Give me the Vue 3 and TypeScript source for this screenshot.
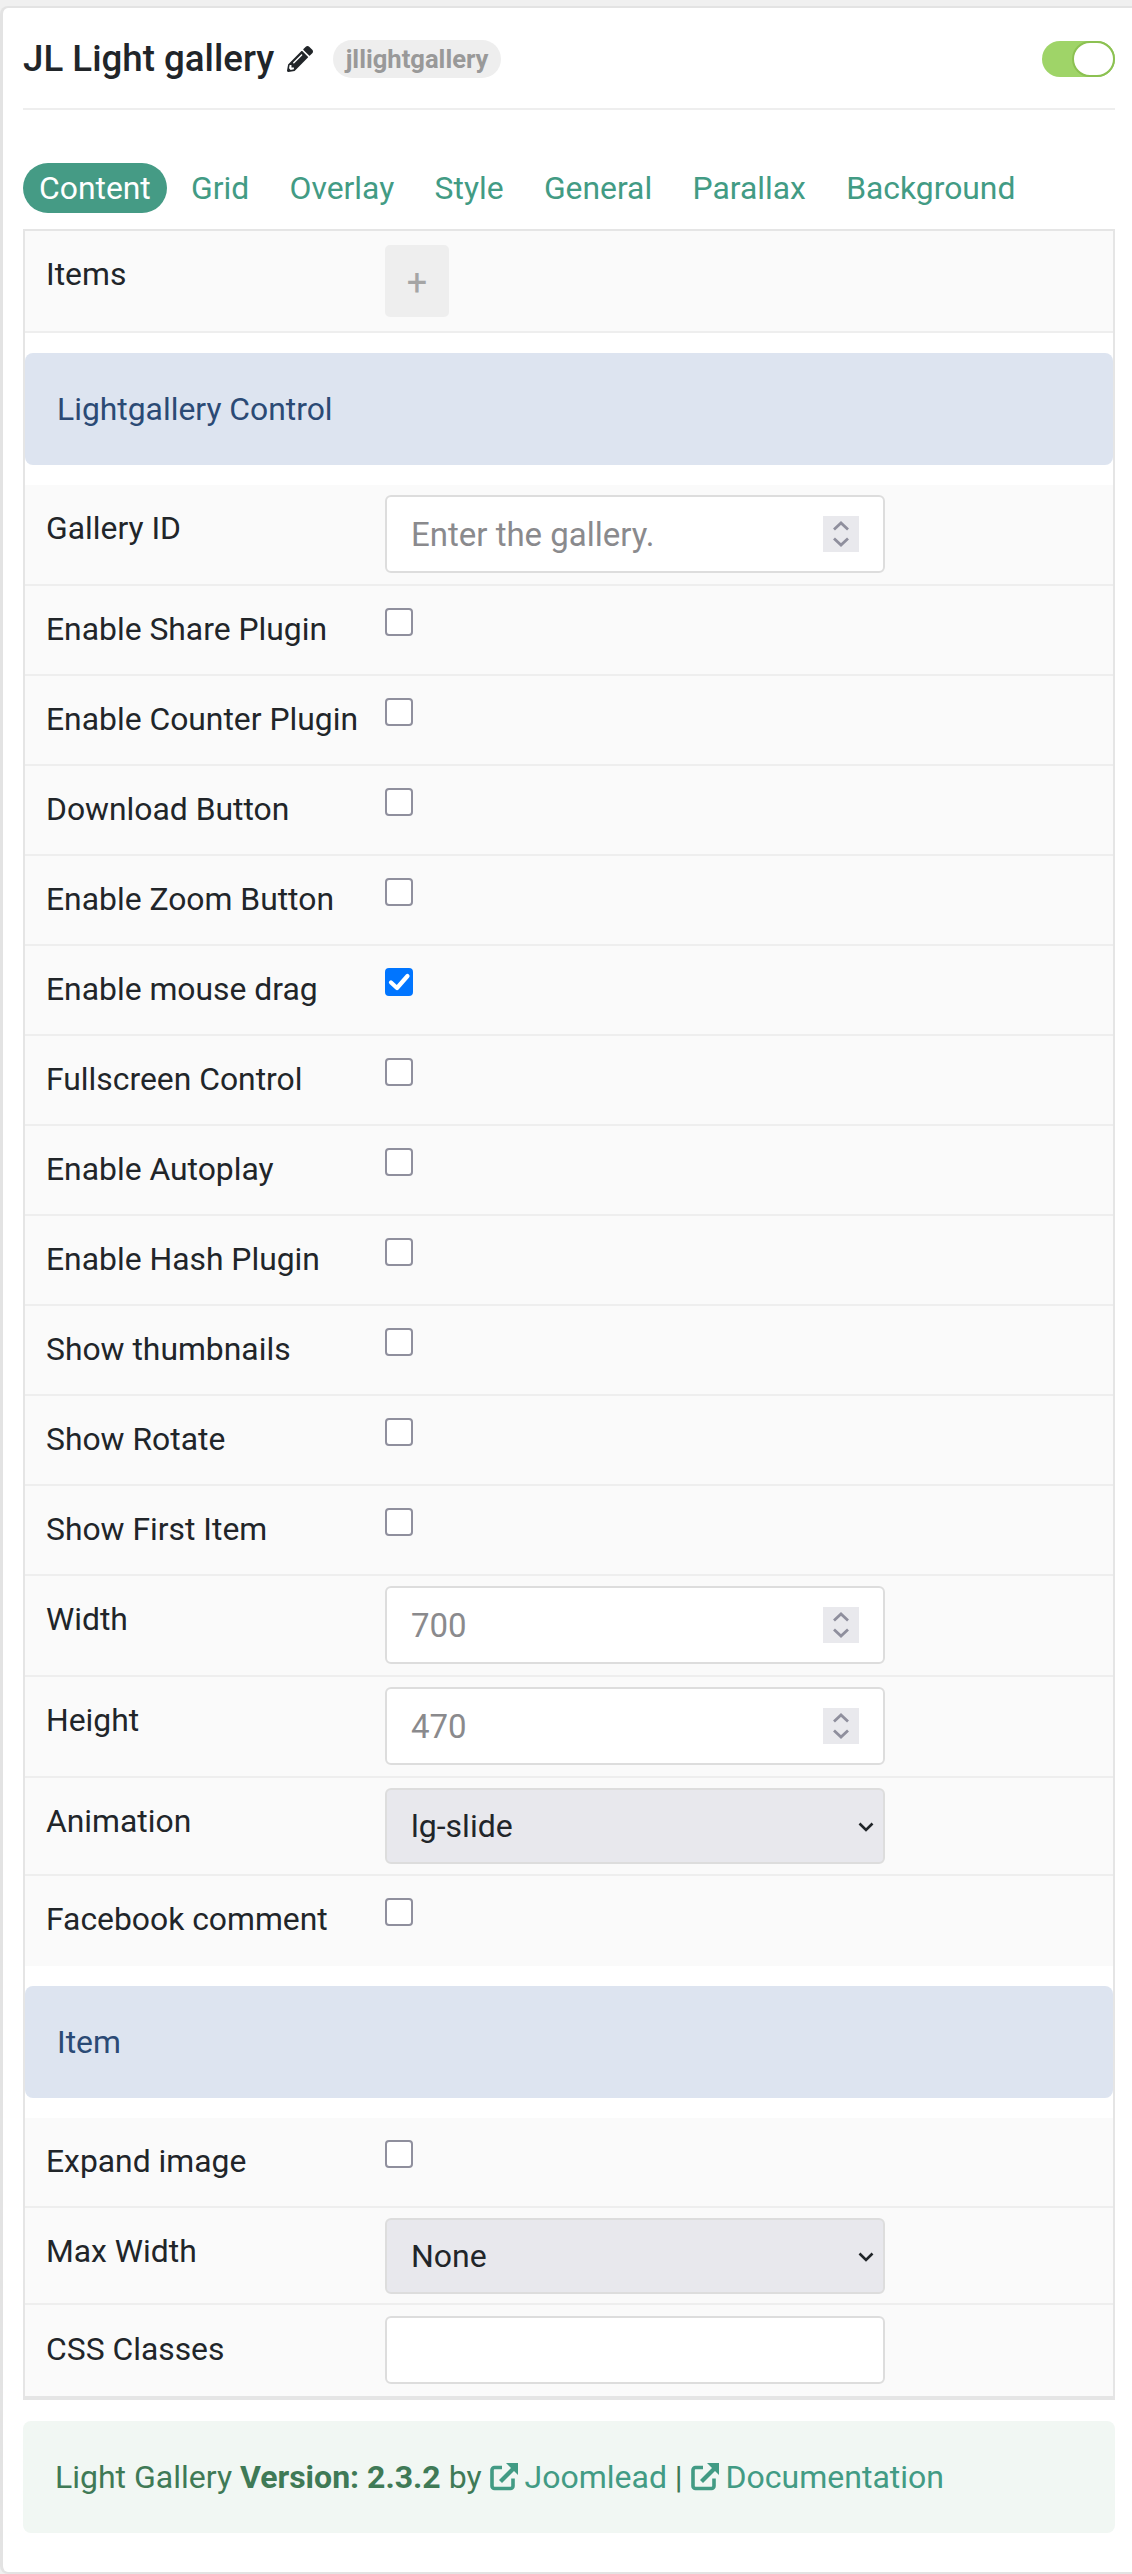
<script setup lang="ts">
type Row = { label: string; kind: 'check' | 'number' | 'select' | 'text'; value?: string; placeholder?: string; checked?: boolean; cls: string }
const tabs = ['Content', 'Grid', 'Overlay', 'Style', 'General', 'Parallax', 'Background']
const check = (label: string, checked = false): Row => ({ label, kind: 'check', checked, cls: 'r-check' })
const controlRows: Row[] = [
  { label: 'Gallery ID', kind: 'number', placeholder: 'Enter the gallery.', cls: 'r-input' },
  check('Enable Share Plugin'),
  check('Enable Counter Plugin'),
  check('Download Button'),
  check('Enable Zoom Button'),
  check('Enable mouse drag', true),
  check('Fullscreen Control'),
  check('Enable Autoplay'),
  check('Enable Hash Plugin'),
  check('Show thumbnails'),
  check('Show Rotate'),
  check('Show First Item'),
  { label: 'Width', kind: 'number', placeholder: '700', cls: 'r-input' },
  { label: 'Height', kind: 'number', placeholder: '470', cls: 'r-input' },
  { label: 'Animation', kind: 'select', value: 'lg-slide', cls: 'r-select' },
  check('Facebook comment'),
]
const itemRows: Row[] = [
  check('Expand image'),
  { label: 'Max Width', kind: 'select', value: 'None', cls: 'r-select' },
  { label: 'CSS Classes', kind: 'text', cls: 'r-text' },
]
const groups = [
  { title: 'Lightgallery Control', rows: controlRows },
  { title: 'Item', rows: itemRows },
]
</script>

<template>
  <div class="card">
    <header class="head">
      <h1 class="title">JL Light gallery</h1>
      <svg class="pencil" viewBox="0 0 512 512"><path fill="#212529" d="M497.9 142.1l-46.1 46.1c-4.7 4.7-12.3 4.7-17 0l-111-111c-4.7-4.7-4.7-12.3 0-17l46.1-46.1c18.7-18.7 49.1-18.7 67.9 0l60.1 60.1c18.8 18.7 18.8 49.1 0 67.9zM284.2 99.8L21.6 362.4.4 483.9c-2.9 16.4 11.4 30.6 27.8 27.8l121.5-21.3 262.6-262.6c4.7-4.7 4.7-12.3 0-17l-111-111c-4.8-4.7-12.4-4.7-17.1 0zM124.1 339.9c-5.5-5.5-5.5-14.3 0-19.8l154-154c5.5-5.5 14.3-5.5 19.8 0s5.5 14.3 0 19.8l-154 154c-5.5 5.5-14.3 5.5-19.8 0zM88 424h48v36.3l-64.5 11.3-31.1-31.1L51.7 376H88v48z"/></svg>
      <span class="badge">jllightgallery</span>
      <span class="toggle"><span class="knob"></span></span>
    </header>

    <nav class="tabs">
      <a v-for="(t, i) in tabs" :key="t" class="tab" :class="{ active: i === 0 }">{{ t }}</a>
    </nav>

    <div class="panel">
      <div class="row r-add">
        <label class="label">Items</label>
        <button class="add" type="button">+</button>
      </div>
      <section v-for="g in groups" :key="g.title" class="group">
        <h2 class="section">{{ g.title }}</h2>
        <div class="rows">
          <div v-for="r in g.rows" :key="r.label" class="row" :class="r.cls">
            <label class="label">{{ r.label }}</label>
            <span v-if="r.kind === 'check'" class="box" :class="{ on: r.checked }">
              <svg v-if="r.checked" viewBox="0 0 28 28"><path d="M6 14.5l6 5.5L22.5 8" fill="none" stroke="#fff" stroke-width="4.2" stroke-linecap="round" stroke-linejoin="round"/></svg>
            </span>
            <div v-else-if="r.kind === 'number'" class="field">
              <input class="input" type="text" :placeholder="r.placeholder" />
              <span class="spin">
                <svg viewBox="0 0 36 36"><path d="M11 13.5l7-6.5 7 6.5M11 22.5l7 6.5 7-6.5" fill="none" stroke="#8f8f9d" stroke-width="2.8"/></svg>
              </span>
            </div>
            <div v-else-if="r.kind === 'select'" class="field">
              <select class="select"><option>{{ r.value }}</option></select>
              <svg class="chev" viewBox="0 0 16 10"><path d="M1.5 1.5L8 8l6.5-6.5" fill="none" stroke="#212529" stroke-width="2.6"/></svg>
            </div>
            <input v-else class="input" type="text" />
          </div>
        </div>
      </section>
    </div>

    <footer class="note">
      Light Gallery <b>Version: 2.3.2</b> by
      <a class="link"><svg class="ext" viewBox="0 0 28 28"><path d="M12 4.5H4.5a2.5 2.5 0 0 0-2.500 2.500v16a2.500 2.500 0 0 0 2.500 2.500h16a2.500 2.500 0 0 0 2.500-2.500v-7.500" fill="none" stroke="currentColor" stroke-width="3.6"/><path d="M10.500 18.500L23 6" fill="none" stroke="currentColor" stroke-width="4.200"/><path d="M16 0h12v12z" fill="currentColor"/></svg>Joomlead</a>
      |
      <a class="link"><svg class="ext" viewBox="0 0 28 28"><path d="M12 4.5H4.5a2.5 2.5 0 0 0-2.500 2.500v16a2.500 2.500 0 0 0 2.500 2.500h16a2.500 2.500 0 0 0 2.500-2.500v-7.500" fill="none" stroke="currentColor" stroke-width="3.6"/><path d="M10.500 18.500L23 6" fill="none" stroke="currentColor" stroke-width="4.200"/><path d="M16 0h12v12z" fill="currentColor"/></svg>Documentation</a>
    </footer>
  </div>
</template>

<style>
html, body { margin: 0; background: #f0f0f0; }
</style>

<style scoped>
.card {
  box-sizing: border-box;
  margin-top: 6px;
  height: 2568px;
  padding: 0 17px 0 20px;
  background: #fff;
  border: 2px solid #e3e3e3;
  border-width: 2px 0 2px 3px;
  border-top-left-radius: 8px;
  border-bottom-left-radius: 8px;
  font-family: Roboto, "Liberation Sans", sans-serif;
  color: #212529;
  font-size: 31.85px;
}
.head {
  display: flex;
  align-items: center;
  height: 98px;
  padding-top: 2px;
  border-bottom: 2px solid #eeeeee;
}
.title { margin: 0; font-size: 36.7px; font-weight: 500; line-height: 1; }
.pencil { width: 26px; height: 26px; margin-left: 13px; }
.badge {
  margin-left: 20px;
  height: 38px;
  line-height: 38px;
  padding: 0 12.5px;
  border-radius: 19px;
  background: #eeeeee;
  color: #999999;
  font-size: 25.6px;
  font-weight: 700;
}
.toggle {
  position: relative;
  margin-left: auto;
  width: 73px;
  height: 36px;
  border-radius: 18px;
  background: #9fd468;
}
.knob {
  position: absolute;
  right: 0;
  top: 0;
  box-sizing: border-box;
  width: 43px;
  height: 36px;
  border-radius: 18px;
  background: #fff;
  border: 2px solid #8cc152;
}
.tabs { display: flex; gap: 8.3px; margin-top: 53px; }
.tab {
  height: 50px;
  line-height: 50px;
  padding: 0 16px;
  border-radius: 25px;
  color: #429b84;
}
.tab.active { background: #459b85; color: #fff; }
.panel {
  margin-top: 16px;
  border: 2px solid #e5e5e5;
  border-bottom-width: 4px;
}
.row {
  box-sizing: border-box;
  display: flex;
  align-items: flex-start;
  background: #fafafa;
  border-bottom: 2px solid #eeeeee;
  padding-left: 21px;
}
.rows .row:last-child { border-bottom: 0; }
.label { flex: 0 0 339px; line-height: 48px; margin-top: 9px; }
.r-add { height: 102px; padding-top: 14px; }
.r-add .label { margin-top: 5px; }
.r-input { height: 101px; padding-top: 10px; }
.r-check { height: 90px; padding-top: 19px; }
.r-check .label { margin-top: 0; }
.r-select { height: 97.5px; padding-top: 10px; }
.r-text { height: 91px; padding-top: 11px; }
.r-text .label { margin-top: 9px; }
.add {
  width: 64px;
  height: 72px;
  padding: 3px 0 0;
  border: 0;
  border-radius: 5px;
  background: #eeeeee;
  color: #a5a5a5;
  font: 400 36px Roboto, sans-serif;
}
.section {
  margin: 20px 0;
  height: 112px;
  line-height: 112px;
  padding-left: 32px;
  border-radius: 8px;
  background: #dde4f0;
  color: #2b4a75;
  font-size: 31.85px;
  font-weight: 400;
}
.box {
  box-sizing: border-box;
  display: block;
  width: 28px;
  height: 28px;
  margin-top: 3px;
  border: 2px solid #8f8f9d;
  border-radius: 4px;
  background: #fff;
}
.box.on { background: #0075ff; border-color: #0075ff; }
.box svg { display: block; width: 28px; height: 28px; margin: -2px; }
.field { position: relative; width: 500px; }
.input {
  box-sizing: border-box;
  display: block;
  width: 500px;
  height: 78px;
  padding: 0 24px;
  border: 2px solid #dddddd;
  border-radius: 6px;
  background: #fff;
  font: 400 33px Roboto, sans-serif;
  outline: 0;
}
.r-text .input { height: 68px; }
.input::placeholder { color: #8a8a8d; opacity: 1; }
.spin {
  position: absolute;
  right: 26px;
  top: 21px;
  width: 36px;
  height: 36px;
  background: #e9e9ed;
}
.spin svg { display: block; width: 36px; height: 36px; }
.select {
  box-sizing: border-box;
  display: block;
  width: 500px;
  height: 76px;
  padding: 0 24px;
  border: 2px solid #dddddd;
  border-radius: 6px;
  background: #e8e8ed;
  color: #212529;
  font: 400 32px Roboto, sans-serif;
  appearance: none;
  outline: 0;
}
.chev { position: absolute; right: 11px; top: 34px; width: 16px; height: 10px; }
.note {
  margin-top: 21px;
  height: 112px;
  line-height: 112px;
  padding-left: 32px;
  border-radius: 8px;
  background: #f1f7f3;
  color: #3f7a56;
  font-size: 32px;
}
.note b { font-weight: 700; }
.link { color: #429b84; }
.ext { width: 28px; height: 28px; vertical-align: -3px; margin-right: 7px; }
</style>
